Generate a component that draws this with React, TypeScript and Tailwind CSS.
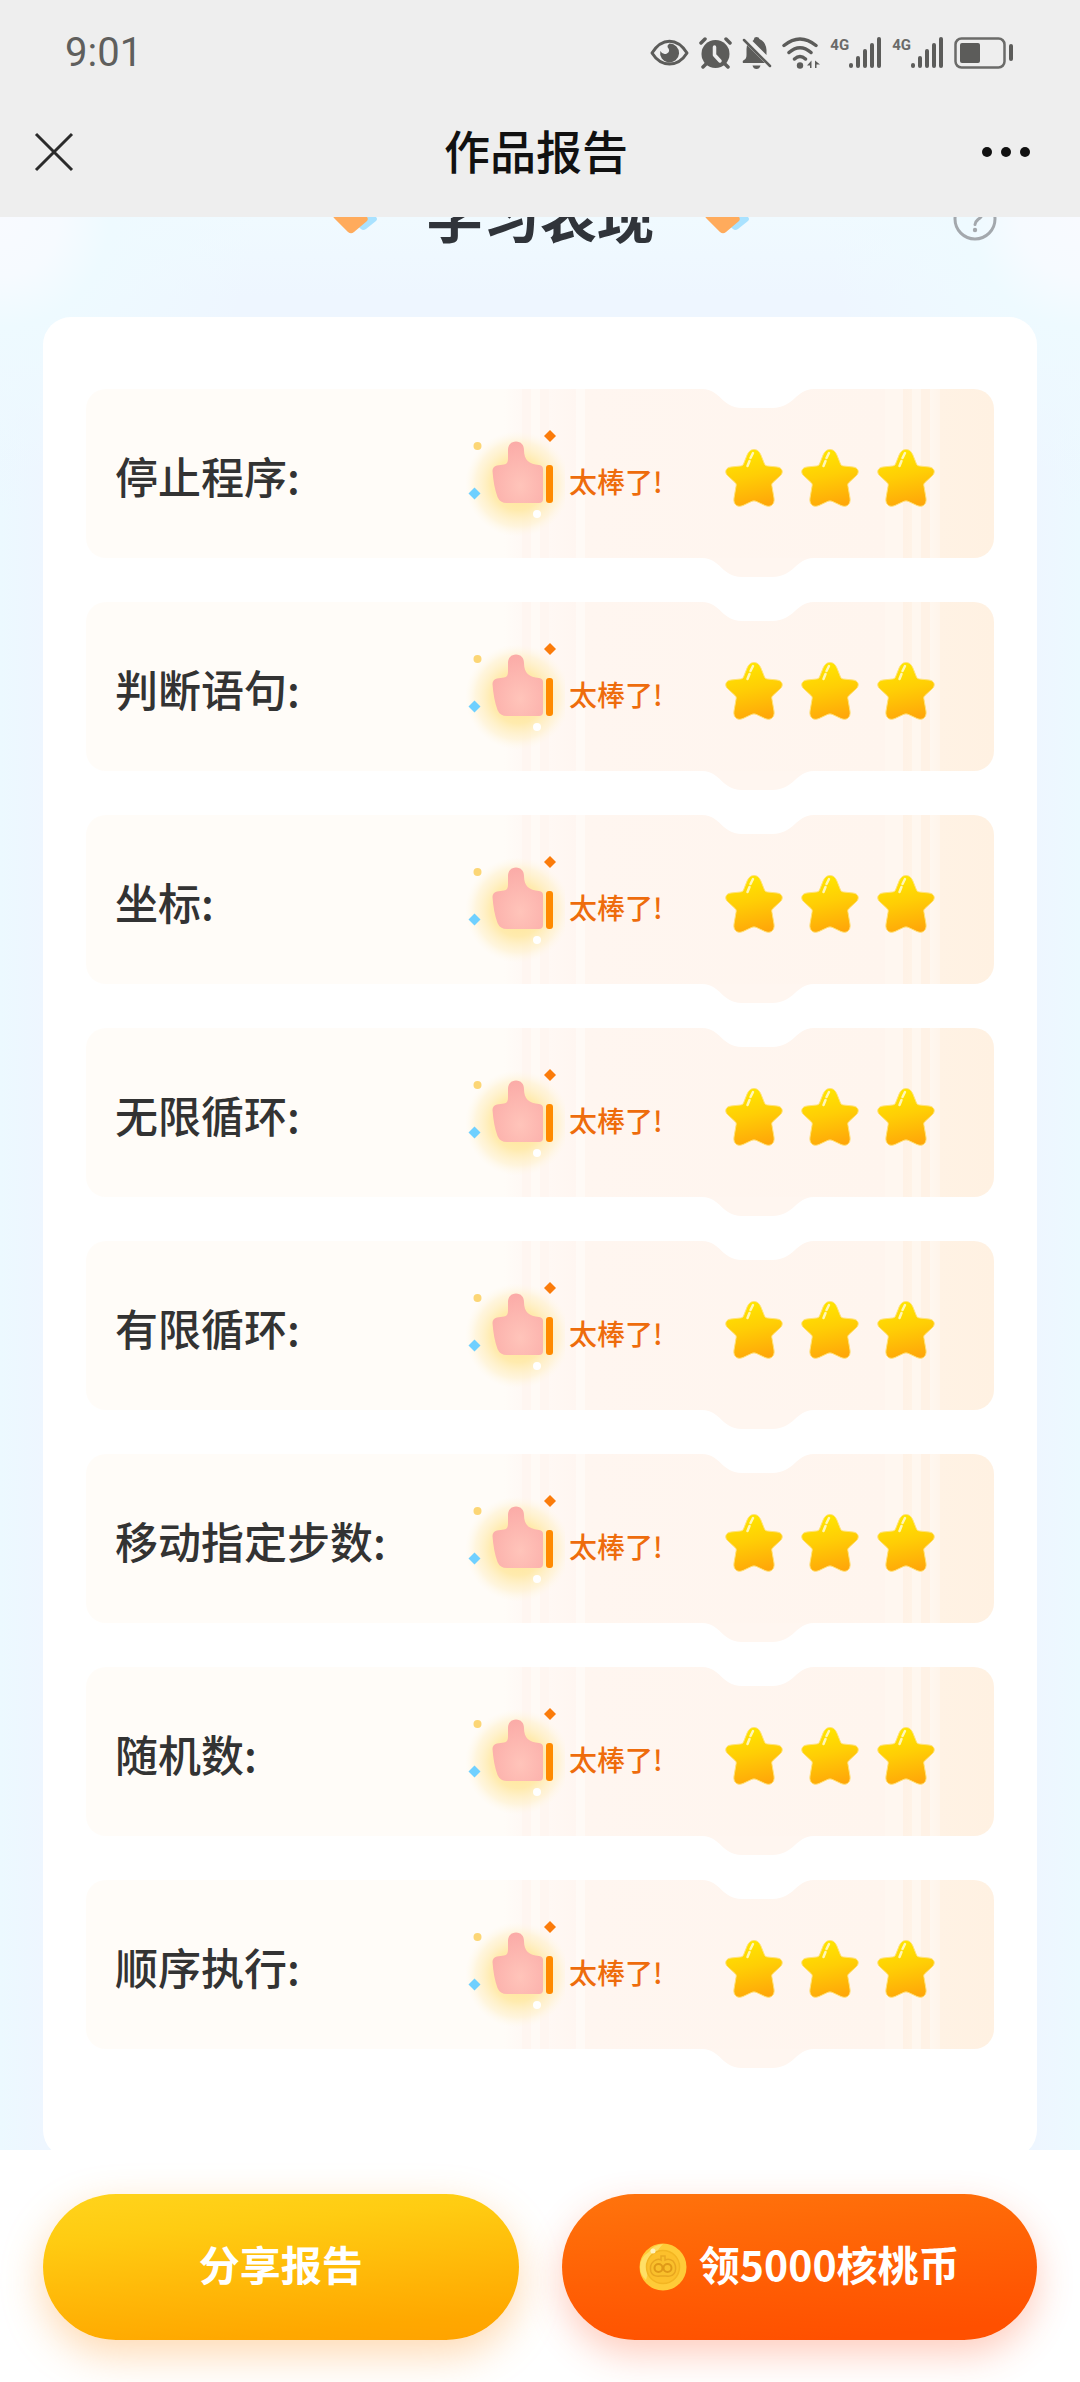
import React from "react";

const SKILLS = ["停止程序", "判断语句", "坐标", "无限循环", "有限循环", "移动指定步数", "随机数", "顺序执行"];

function EyeIcon() {
  return (
    <svg width="39" height="30" viewBox="0 0 39 30" fill="none" aria-hidden="true">
      <path d="M2 15C7 7 13 3.200 19.500 3.200S32 7 37 15C32 23 26 26 19.500 26S7 23 2 15Z" stroke="#5c5c5a" strokeWidth="3" strokeLinejoin="round" />
      <path d="M19.500 5.500A9.500 9.500 0 1 1 10.300 13Q13 17.500 17 15.500Q21 13 17.500 9Q17 7 19.500 5.500Z" fill="#5c5c5a" />
    </svg>
  );
}

function AlarmIcon() {
  return (
    <svg width="33" height="32" viewBox="0 0 33 32" fill="none" aria-hidden="true">
      <circle cx="16.500" cy="17" r="14" fill="#5c5c5a" />
      <path d="M2 6L6 2M31 6L27 2M7 27L4 30M26 27L29 30" stroke="#5c5c5a" strokeWidth="3.500" strokeLinecap="round" />
      <path d="M15.500 10V18L21 24" stroke="#eeeeee" strokeWidth="3.500" strokeLinecap="round" strokeLinejoin="round" />
    </svg>
  );
}

function BellOffIcon() {
  return (
    <svg width="30" height="32" viewBox="0 0 30 32" fill="none" aria-hidden="true">
      <path d="M14.500 0Q17 0 17.500 2Q24 5 24.500 13V18L10.500 4Q12 3 12 2Q12 0 14.500 0Z" fill="#5c5c5a" />
      <path d="M5 8L23 26H1Q0 24 2 23Q4.500 22 4.500 18V12Z" fill="#5c5c5a" />
      <path d="M10.500 28.500H18.500Q17.500 32 14.500 32T10.500 28.500Z" fill="#5c5c5a" />
      <path d="M2 3L28 29" stroke="#5c5c5a" strokeWidth="2.500" strokeLinecap="round" />
    </svg>
  );
}

function WifiIcon() {
  return (
    <svg width="38" height="32" viewBox="0 0 38 32" fill="none" aria-hidden="true">
      <path d="M2 8.500Q18 -4.500 34 8.500M7 15.500Q18 6 29 15.500M12.500 22Q18 17 23.500 22" stroke="#5c5c5a" strokeWidth="3.500" strokeLinecap="round" />
      <circle cx="18" cy="28.500" r="3.200" fill="#5c5c5a" />
      <path d="M29.500 23.500V31H28V28.500H25ZM33 23.500L38 27.500H34.500V31H33Z" fill="#5c5c5a" />
    </svg>
  );
}

function Signal() {
  return (
    <div className="flex h-8 items-start">
      <span className="font-['Roboto',sans-serif] text-[15px] font-bold leading-4 text-[#6a6a68]">4G</span>
      <svg width="33" height="32" viewBox="0 0 33 32" aria-hidden="true">
        <g fill="#5c5c5a">
          <rect x="0" y="26" width="4" height="5" rx="2" />
          <rect x="7" y="19" width="4" height="12" rx="2" />
          <rect x="14" y="12" width="4" height="19" rx="2" />
          <rect x="21" y="6" width="4" height="25" rx="2" />
          <rect x="28" y="0" width="4" height="31" rx="2" />
        </g>
      </svg>
    </div>
  );
}

function BatteryIcon() {
  return (
    <svg width="60" height="32" viewBox="0 0 60 32" fill="none" aria-hidden="true">
      <rect x="1.500" y="1.500" width="49" height="29" rx="6" stroke="#6b6b69" strokeWidth="2.500" />
      <rect x="6" y="6" width="20" height="20" rx="2" fill="#5c5c5a" />
      <rect x="55" y="7" width="4" height="17" rx="2" fill="#5c5c5a" />
    </svg>
  );
}

function Header() {
  return (
    <header className="relative z-10 bg-[#eeeeee]">
      <div className="flex h-[106px] items-center justify-between pl-[65px] pr-[66px]">
        <time className="font-['Roboto',sans-serif] text-[40px] leading-none text-[#5f5f5d]">9:01</time>
        <div className="flex items-center gap-[10px]">
          <EyeIcon />
          <AlarmIcon />
          <BellOffIcon />
          <WifiIcon />
          <Signal />
          <Signal />
          <BatteryIcon />
        </div>
      </div>
      <div className="grid h-[111px] grid-cols-[1fr_auto_1fr] items-start pl-[34px] pr-[42px] pt-[18px]">
        <button aria-label="关闭" className="flex h-14 items-center justify-self-start">
          <svg width="40" height="40" viewBox="0 0 40 40" aria-hidden="true">
            <path d="M2 2L38 38M38 2L2 38" stroke="#2b2b2b" strokeWidth="3" />
          </svg>
        </button>
        <h1 className="text-[46px] font-medium leading-[50px] text-[#111111]">作品报告</h1>
        <button aria-label="更多" className="mr-2 flex h-14 items-center gap-[9px] justify-self-end">
          <span className="size-[10px] rounded-full bg-[#111111]" />
          <span className="size-[10px] rounded-full bg-[#111111]" />
          <span className="size-[10px] rounded-full bg-[#111111]" />
        </button>
      </div>
    </header>
  );
}

function Gems() {
  return (
    <svg width="48" height="60" viewBox="0 0 48 60" aria-hidden="true">
      <path d="M32 17Q34 15 36 17L46 28Q48 30 46 32L36 40Q33 42 31 40L25 35Z" fill="#a9e2ff" />
      <path d="M18 14Q20 12 22 14L37 28Q38.500 30 37 32L24 43Q21 45.500 18 43L4 29Q3 28 4 27Z" fill="#ffab5c" />
    </svg>
  );
}

function ThumbIcon() {
  return (
    <svg width="100" height="124" viewBox="0 8 100 124" aria-hidden="true">
      <defs>
        <radialGradient id="glow">
          <stop offset="0" stopColor="#ffe38a" />
          <stop offset="0.5" stopColor="#ffe9a6" stopOpacity="0.9" />
          <stop offset="0.8" stopColor="#fff1cc" stopOpacity="0.6" />
          <stop offset="1" stopColor="#fff8e8" stopOpacity="0" />
        </radialGradient>
        <radialGradient id="hand" cx="0.55" cy="0.72" r="0.7">
          <stop offset="0" stopColor="#ffc4ba" />
          <stop offset="1" stopColor="#fbaca8" />
        </radialGradient>
      </defs>
      <circle cx="53" cy="76" r="53" fill="url(#glow)" />
      <path
        d="M51 33.500C56 33.500 59 37 59 42C59 52 64 56 74 57Q78 57.500 78 61V91Q78 95 74 95H42Q35 95 32.500 89Q28.500 78 27.500 63Q27.500 58.500 32 57.500L39 56.500Q43 56 43 51V42C43 37 46 33.500 51 33.500Z"
        fill="url(#hand)"
      />
      <rect x="81" y="57" width="7" height="38" rx="3" fill="#ff8a00" />
      <path d="M85 22L91 28L85 34L79 28Z" fill="#fb7b0a" />
      <path d="M9.500 79.500L15.500 85.500L9.500 91.500L3.500 85.500Z" fill="#6fd0ff" />
      <circle cx="12.500" cy="38" r="4" fill="#fcd676" />
      <circle cx="72" cy="106" r="4" fill="#ffffff" />
    </svg>
  );
}

function StarIcon() {
  return (
    <svg width="60" height="60" viewBox="0 0 60 60" aria-hidden="true">
      <defs>
        <linearGradient id="star" x1="0.4" y1="0" x2="0.6" y2="1">
          <stop offset="0" stopColor="#ffe600" />
          <stop offset="0.45" stopColor="#ffce05" />
          <stop offset="1" stopColor="#ffa609" />
        </linearGradient>
      </defs>
      <path
        d="M30 1.500C34 1.500 36 4.500 37.500 8.500L40.500 16C41 17.300 42 17.800 43.500 18L53 19C58.500 19.600 60 24.500 56 28L49 34.500C47.800 35.600 47.500 36.500 48 38.500L50 50C51 56.500 46.500 60 41 57.500L32.500 53.500C30.800 52.700 29.200 52.700 27.500 53.500L19 57.500C13.500 60 9 56.500 10 50L12 38.500C12.500 36.500 12.200 35.600 11 34.500L4 28C0 24.500 1.500 19.600 7 19L16.500 18C18 17.800 19 17.300 19.500 16L22.500 8.500C24 4.500 26 1.500 30 1.500Z"
        fill="url(#star)"
        stroke="#ffe27a"
      />
      <path d="M29 5L26.500 10M25.500 13L23.500 18" stroke="#fff6b8" strokeWidth="2.500" strokeLinecap="round" />
    </svg>
  );
}

function CoinIcon() {
  return (
    <svg width="48" height="48" viewBox="0 0 48 48" fill="none" aria-hidden="true">
      <circle cx="24" cy="24" r="23.500" fill="#ffcb38" />
      <path d="M10 9Q14 2 24 1Q13 12 7 37Q1 32 1 24Q1 14 10 9Z" fill="#ffdf66" />
      <circle cx="24" cy="24" r="16.500" fill="#fcc02c" stroke="#f3b522" strokeWidth="1.500" />
      <path d="M15 18Q19 15 22 17V13H26V17Q30 15 34 18Q38 23 36 29Q34 34 27 33H21Q14 34 12 29Q10 22 15 18Z" fill="#f9c02c" stroke="#e8a620" strokeWidth="1.500" />
      <circle cx="19.500" cy="25" r="4" stroke="#df9a18" strokeWidth="2" />
      <circle cx="28.500" cy="25" r="4" stroke="#df9a18" strokeWidth="2" />
      <circle cx="14" cy="8" r="2.500" fill="#fff3c0" />
    </svg>
  );
}

function SkillRow({ name }: { name: string }) {
  return (
    <li className="relative flex h-[169px] items-center rounded-[20px] bg-[linear-gradient(90deg,#fffcf8_0%,#fffcf8_46%,#fff9f5_48%,#fff6f1_48%,#fff6f1_49%,#fffaf6_49%,#fffaf6_50%,#fff6f1_50%,#fff6f1_51%,#fff8f4_51%,#fff6f1_54%,#fffaf6_54%,#fffaf6_55%,#fff6f0_55%,#fff5ee_88%,#fff7f0_88%,#fff7f0_90%,#fff2e6_90%,#fff3e7_91%,#fff7ef_91%,#fff7ef_92%,#fff2e6_92%,#fff2e6_93%,#fff7ef_93%,#fff5eb_94%,#fff2e4_94%,#fff1e2_100%)] pl-[29px] pr-[58px] pt-2">
      <svg className="absolute right-[180px] top-0" width="112" height="19" viewBox="0 0 112 19" aria-hidden="true">
        <path d="M0 0C20 1 18 18 40 19H70C94 18 92 1 112 0Z" fill="#ffffff" />
      </svg>
      <svg className="absolute right-[180px] top-full" width="112" height="19" viewBox="0 0 112 19" aria-hidden="true">
        <path d="M0 0C20 1 18 18 40 19H70C94 18 92 1 112 0Z" fill="#fff6f0" />
      </svg>
      <h3 className="flex-1 pb-1.5 text-[43px] font-medium leading-[60px] text-[#333333]">{name}:</h3>
      <div className="flex w-[259px] items-center gap-1">
        <ThumbIcon />
        <span className="pt-1.5 text-[28px] font-medium leading-10 text-[#ee6c0c]">太棒了!</span>
      </div>
      <div role="img" aria-label="3 颗星" className="flex gap-4">
        <StarIcon />
        <StarIcon />
        <StarIcon />
      </div>
    </li>
  );
}

export default function App() {
  return (
    <div className="flex min-h-screen flex-col bg-white font-['Noto_Sans_CJK_SC',sans-serif]">
      <Header />
      <main className="flex-1 overflow-hidden bg-[linear-gradient(90deg,#ecf9ff_0px,#eef6ff_43px,#eef6ff_calc(100%-43px),#ecf9ff_100%)]">
        <div className="bg-[radial-gradient(circle_at_0px_0px,#f8faff_0px,#f6faff_60px,#eefaff_110px,transparent_260px),radial-gradient(circle_at_100%_0px,#f8faff_0px,#f6faff_60px,#eefaff_110px,transparent_260px),linear-gradient(180deg,#f0faff_0px,#eef6ff_80px,transparent_300px)] px-[43px]">
          <div className="grid grid-cols-[1fr_auto_1fr] items-center pb-[68px]">
            <span />
            <div className="-mt-7 flex items-center gap-[48px]">
              <Gems />
              <h2 className="self-start text-[57px] font-bold leading-[48px] text-[#30343a]">学习表现</h2>
              <Gems />
            </div>
            <button aria-label="说明" className="-mt-7 mr-10 justify-self-end">
              <svg width="44" height="44" viewBox="0 0 44 44" fill="none" aria-hidden="true">
                <circle cx="22" cy="22" r="20" stroke="#a3a8ad" strokeWidth="3" />
                <path d="M15 17Q15 10 22 10T29 17Q29 20 25 22.500Q22 25 22 27.500" stroke="#a3a8ad" strokeWidth="3" strokeLinecap="round" />
                <circle cx="22" cy="33" r="2.200" fill="#a3a8ad" />
              </svg>
            </button>
          </div>
          <section className="-mb-2 rounded-[28px] bg-white px-[43px] pb-[109px] pt-[72px]">
            <ul className="flex flex-col gap-[44px]">
              {SKILLS.map((name) => (
                <SkillRow key={name} name={name} />
              ))}
            </ul>
          </section>
        </div>
      </main>
      <footer className="grid grid-cols-2 gap-[43px] overflow-hidden bg-white px-[43px] pb-[42px] pt-[44px] text-[41px] font-bold text-white">
        <button className="h-[146px] rounded-full bg-[linear-gradient(175deg,#ffd21a_5%,#ffcc12_25%,#ffa800_85%,#ffa200_100%)] pb-1.5 shadow-[0_14px_40px_rgba(255,160,60,0.4)]">分享报告</button>
        <button className="flex h-[146px] items-center justify-center gap-3 rounded-full bg-[linear-gradient(175deg,#ff720c_5%,#ff6a08_25%,#ff5000_90%)] shadow-[0_14px_36px_rgba(255,90,40,0.3)]">
          <CoinIcon />
          <span className="pb-1.5">领5000核桃币</span>
        </button>
      </footer>
    </div>
  );
}
